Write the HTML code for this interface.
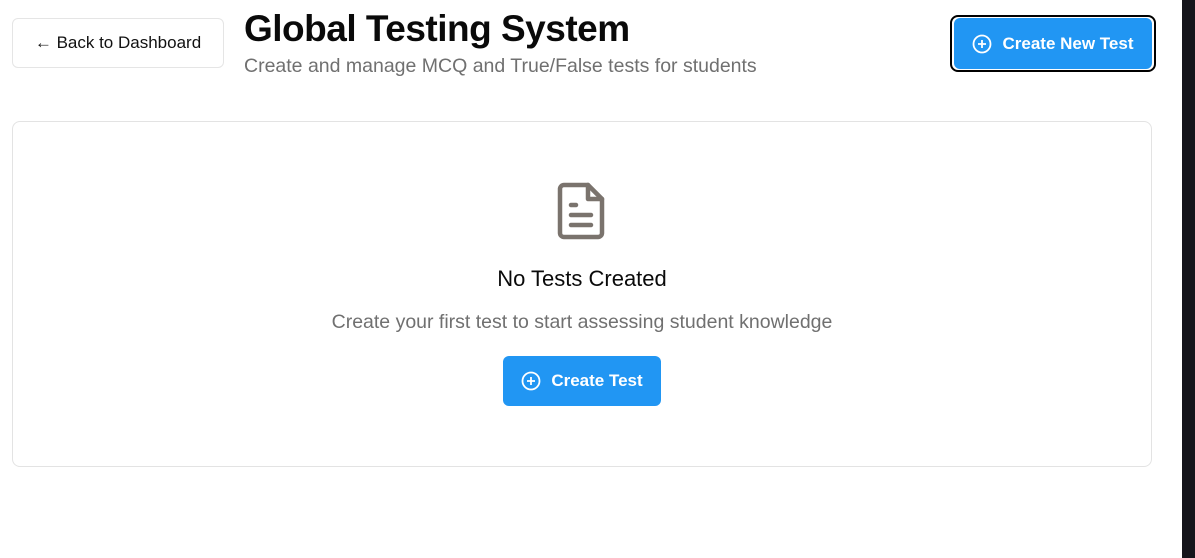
<!DOCTYPE html><html><head><style>
body{margin:0;width:1195px;height:558px;background:#fff;font-family:"Liberation Sans",sans-serif;position:relative;overflow:hidden}
.bar{position:absolute;left:1182px;top:0;width:13px;height:558px;background:#15151b}
.back{position:absolute;left:12px;top:18px;width:210px;height:48px;border:1px solid #e5e5e5;border-radius:6px;font-size:17px;line-height:48px;text-align:center;color:#111}
h1{position:absolute;left:244px;top:8px;margin:0;font-size:37px;font-weight:bold;color:#0a0a0a;letter-spacing:-0.5px}
.sub{position:absolute;left:244px;top:55px;font-size:19.5px;color:#707070}
.ring{position:absolute;left:950px;top:15px;width:202px;height:53px;border:2px solid #000;border-radius:8px}
.btn{position:absolute;background:#2196f3;color:#fff;border-radius:6px;font-weight:bold;font-size:17px;display:flex;align-items:center;justify-content:center;gap:10px}
.card{position:absolute;left:12px;top:121px;width:1138px;height:344px;border:1px solid #e3e3e3;border-radius:8px}
.c{position:absolute;left:12px;width:1140px;text-align:center}
</style></head><body>
<div class="bar"></div>
<div class="back">← Back to Dashboard</div>
<h1>Global Testing System</h1>
<div class="sub">Create and manage MCQ and True/False tests for students</div>
<div class="ring"></div>
<div class="btn" style="left:954px;top:18px;width:198px;height:51px"><svg width="20" height="20" viewBox="0 0 20 20" fill="none" stroke="#fff" stroke-width="1.8"><circle cx="10" cy="10" r="8.5"/><path d="M10 6v8M6 10h8"/></svg>Create New Test</div>
<div class="card"></div>
<svg style="position:absolute;left:556px;top:181px" width="52" height="60" viewBox="0 0 52 60" fill="none" stroke="#7a736d" stroke-width="4.5" stroke-linejoin="round" stroke-linecap="round"><path d="M8 4h24l14 14v34a4 4 0 0 1-4 4H8a4 4 0 0 1-4-4V8a4 4 0 0 1 4-4z"/><path d="M32 4v14h14"/><path d="M15 24h5M15 34h20M15 44h20"/></svg>
<div class="c" style="top:266px;font-size:22px;color:#0a0a0a">No Tests Created</div>
<div class="c" style="top:311px;font-size:19.5px;color:#707070">Create your first test to start assessing student knowledge</div>
<div class="btn" style="left:503px;top:356px;width:158px;height:50px"><svg width="20" height="20" viewBox="0 0 20 20" fill="none" stroke="#fff" stroke-width="1.8"><circle cx="10" cy="10" r="8.5"/><path d="M10 6v8M6 10h8"/></svg>Create Test</div>
</body></html>
